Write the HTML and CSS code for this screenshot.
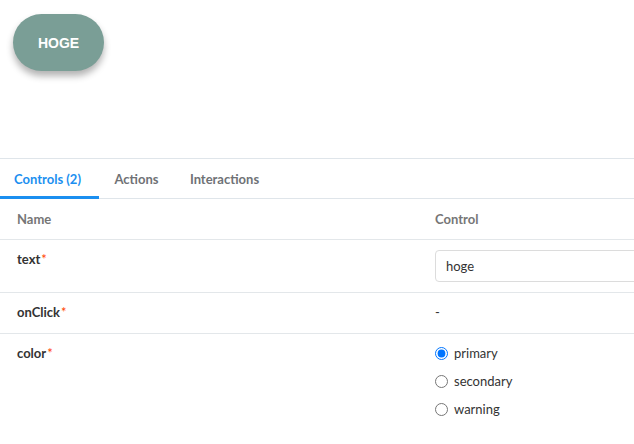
FILE: index.html
```html
<!DOCTYPE html>
<html>
<head>
<meta charset="utf-8">
<link rel="stylesheet" href="styles.css">
</head>
<body>
<div class="canvas">
  <button class="hoge-btn">HOGE</button>
</div>
<div class="addons">
  <div class="tabs">
    <div class="tab tab-active t1">Controls (2)</div>
    <div class="tab t2">Actions</div>
    <div class="tab t3">Interactions</div>
  </div>
  <div class="table">
    <div class="row head">
      <div class="c-name">Name</div>
      <div class="c-ctrl">Control</div>
    </div>
    <div class="row r-text">
      <div class="c-name"><b>text</b><span class="req">*</span></div>
      <div class="c-ctrl c-input"><div class="input">hoge</div></div>
    </div>
    <div class="row">
      <div class="c-name"><b>onClick</b><span class="req">*</span></div>
      <div class="c-ctrl">-</div>
    </div>
    <div class="row last">
      <div class="c-name"><b>color</b><span class="req">*</span></div>
      <div class="c-ctrl radios">
        <label class="radio"><input type="radio" name="color" checked><span>primary</span></label>
        <label class="radio"><input type="radio" name="color"><span>secondary</span></label>
        <label class="radio"><input type="radio" name="color"><span>warning</span></label>
      </div>
    </div>
  </div>
</div>
</body>
</html>
```
FILE: styles.css
```css
html, body {
  margin: 0;
  padding: 0;
  background: #fff;
  overflow: hidden;
  width: 634px;
  height: 444px;
}
body {
  font-family: Lato, "Open Sans", sans-serif;
  color: #333;
}
.canvas {
  height: 158px;
  padding: 14px 0 0 13px;
  box-sizing: border-box;
}
.hoge-btn {
  width: 91px;
  height: 57px;
  border: none;
  border-radius: 29px;
  background: #7a9e96;
  color: #fff;
  font-family: "Liberation Sans", Arial, sans-serif;
  font-weight: bold;
  font-size: 14px;
  box-shadow: 0 5px 7px rgba(0, 0, 0, 0.3);
  padding: 0;
}
.addons {
  border-top: 1px solid #dfe5ea;
}
.tabs {
  display: flex;
  height: 39px;
  border-bottom: 1px solid #dfe5ea;
}
.tab {
  display: flex;
  align-items: center;
  justify-content: center;
  font-size: 13px;
  font-weight: bold;
  color: #6f7276;
  box-sizing: border-box;
  height: 40px;
}
.t1 { width: 99px; padding-right: 4px; }
.t2 { width: 75px; }
.t3 { width: 101px; }
.tab-active {
  color: #1b8ff0;
  border-bottom: 3px solid #1b8ff0;
  padding-top: 3px;
}
.table {
  width: 634px;
  overflow: hidden;
}
.row {
  display: flex;
  border-bottom: 1px solid #e3e7ea;
  font-size: 13px;
}
.row.last { border-bottom: none; }
.c-name {
  flex: 0 0 403px;
  padding: 9px 0 11px 17px;
  line-height: 20px;
}
.c-ctrl {
  flex: 0 0 auto;
  padding: 9px 0 11px 15px;
  line-height: 20px;
}
.c-ctrl.c-input {
  padding-top: 10px;
  padding-bottom: 10px;
}
.head .c-name, .head .c-ctrl {
  font-weight: bold;
  color: #767676;
  padding-top: 10px;
  padding-bottom: 10px;
}
.c-name b {
  font-weight: bold;
  color: #333;
}
.req {
  color: #ff4400;
  font-weight: normal;
  margin-left: 1px;
}
.input {
  width: 240px;
  height: 32px;
  box-sizing: border-box;
  border: 1px solid #dcdcdc;
  border-radius: 4px;
  padding: 0 10px;
  display: flex;
  align-items: center;
  color: #333;
}
.radios {
  display: flex;
  flex-direction: column;
  gap: 8px;
}
.radio {
  display: flex;
  align-items: center;
  height: 20px;
  color: #333;
}
.radio input {
  margin: 0 6px 0 0;
  width: 13px;
  height: 13px;
  accent-color: #0075ff;
}
```
